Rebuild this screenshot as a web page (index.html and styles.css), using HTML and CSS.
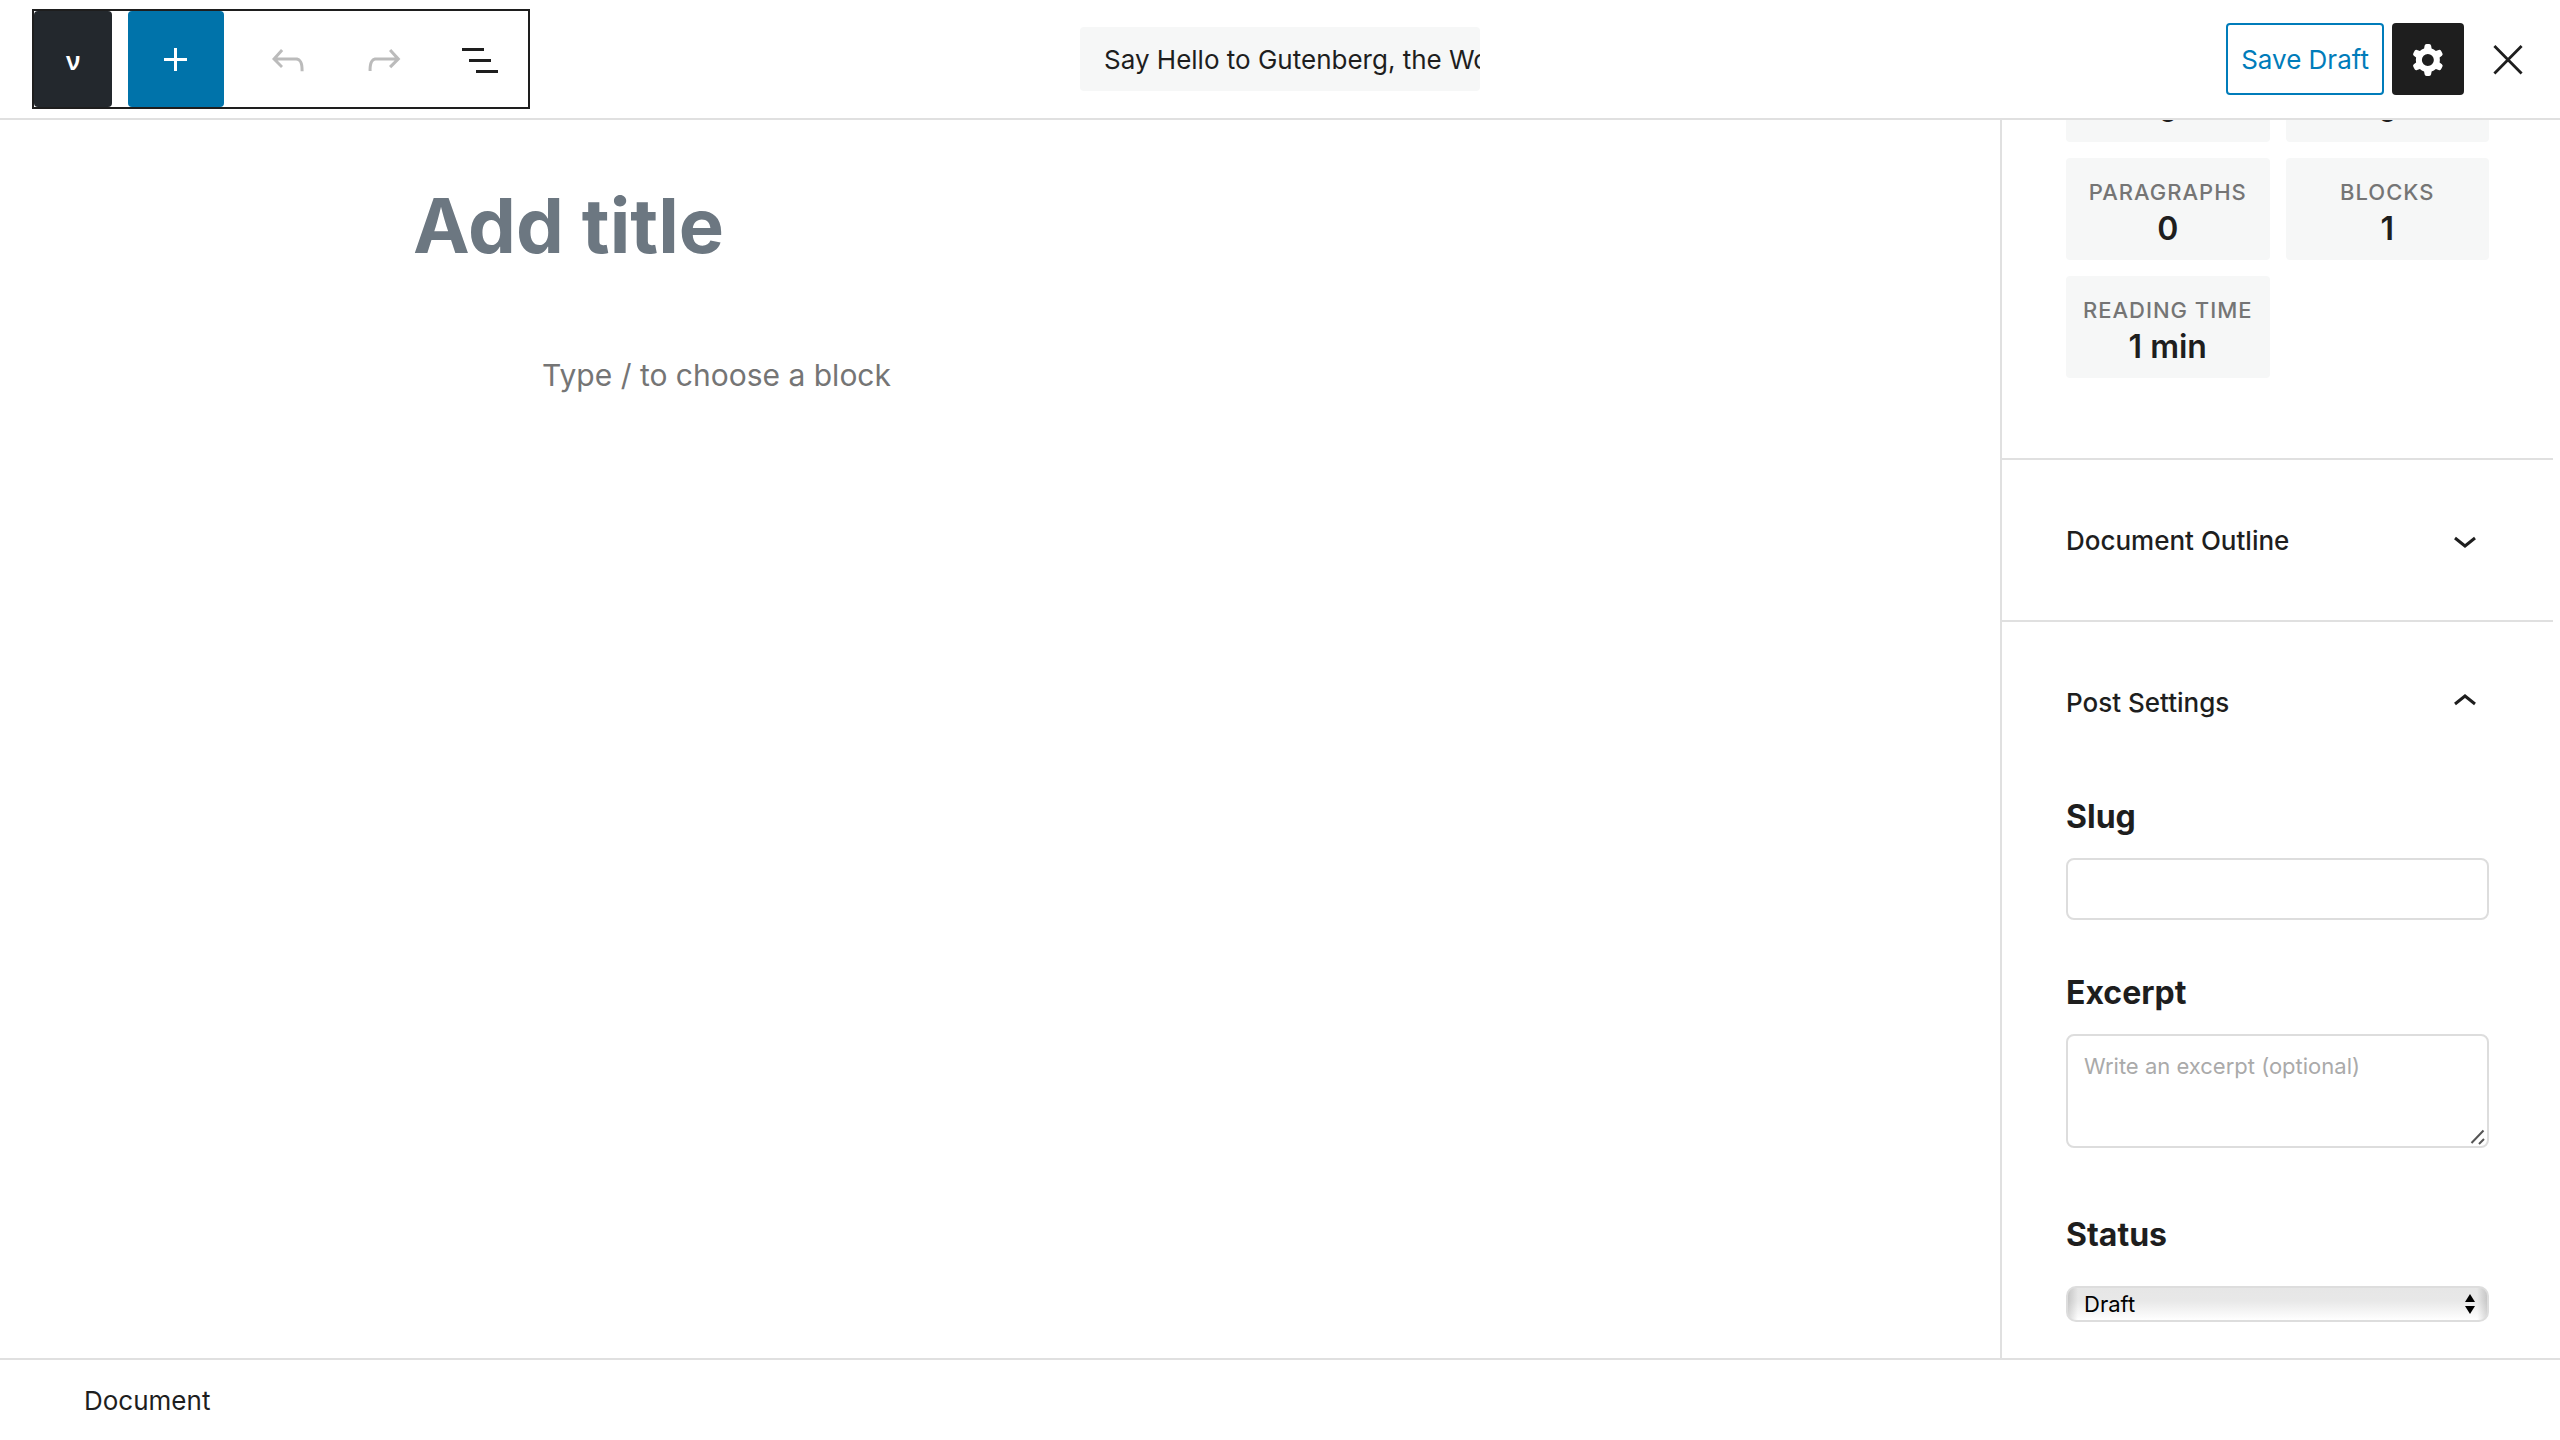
FILE: index.html
```html
<!DOCTYPE html>
<html lang="en">
<head>
<meta charset="utf-8">
<title>Add title</title>
<link rel="stylesheet" href="styles.css">
</head>
<body>
<div class="editor">
  <header class="header">
    <div class="toolbar" role="toolbar" aria-label="Document tools">
      <button class="tool tool-brand" type="button">ν</button>
      <button class="tool tool-add" type="button" aria-label="Add block">
        <svg class="icon" viewBox="0 0 24 24"><path d="M11 6h1.500v5H17.500v1.500h-5v5H11v-5H6V11h5z"/></svg>
      </button>
      <button class="tool tool-muted" type="button" aria-label="Undo">
        <svg class="icon" viewBox="0 0 24 24"><path d="M18.3 11.7c-.6-.6-1.4-.9-2.3-.9H6.7l2.9-3.3-1.1-1-4.5 5L8.5 16l1-1-2.7-2.7H16c.5 0 .9.2 1.3.5 1 1 1 3.4 1 4.5v.3h1.5v-.2c0-1.5 0-4.3-1.5-5.7z"/></svg>
      </button>
      <button class="tool tool-muted" type="button" aria-label="Redo">
        <svg class="icon" viewBox="0 0 24 24"><path d="M15.6 6.5l-1.1 1 2.9 3.3H8c-.9 0-1.7.3-2.3.9-1.4 1.5-1.4 4.2-1.4 5.6v.2h1.5v-.3c0-1.1 0-3.5 1-4.5.3-.3.7-.5 1.3-.5h9.2L14.5 15l1.1 1.1 4.6-4.6-4.6-5z"/></svg>
      </button>
      <button class="tool" type="button" aria-label="List view">
        <svg class="icon" viewBox="0 0 24 24"><path d="M3 6h11v1.500H3zM6.500 11.500h11V13h-11zM10 17h11v1.500H10z"/></svg>
      </button>
    </div>
    <button class="switcher" type="button">Say Hello to Gutenberg, the WordPress</button>
    <div class="actions">
      <button class="save" type="button">Save Draft</button>
      <button class="action action-settings" type="button" aria-label="Settings">
        <svg class="icon" viewBox="0 0 24 24"><path fill-rule="evenodd" d="M10.289 4.836A1 1 0 0111.275 4h1.306a1 1 0 01.987.836l.244 1.466c.787.26 1.503.679 2.108 1.218l1.393-.522a1 1 0 011.216.437l.653 1.13a1 1 0 01-.23 1.273l-1.148.944a6.025 6.025 0 010 2.435l1.149.946a1 1 0 01.23 1.272l-.653 1.13a1 1 0 01-1.216.437l-1.394-.522c-.605.54-1.32.958-2.108 1.218l-.244 1.466a1 1 0 01-.987.836h-1.306a1 1 0 01-.986-.836l-.244-1.466a5.995 5.995 0 01-2.108-1.218l-1.394.522a1 1 0 01-1.217-.436l-.653-1.131a1 1 0 01.23-1.272l1.149-.946a6.026 6.026 0 010-2.435l-1.148-.944a1 1 0 01-.23-1.272l.653-1.131a1 1 0 011.217-.437l1.393.522a5.994 5.994 0 012.108-1.218l.244-1.466zM14.929 12a3 3 0 11-6 0 3 3 0 016 0z"/></svg>
      </button>
      <button class="action" type="button" aria-label="Close">
        <svg class="icon line" viewBox="0 0 24 24"><path d="M5.2 5l13.6 13.8M18.8 5L5.2 18.800"/></svg>
      </button>
    </div>
  </header>

  <div class="body">
    <main class="canvas">
      <div class="writing">
        <input class="post-title" type="text" placeholder="Add title" aria-label="Add title">
        <input class="post-block" type="text" placeholder="Type / to choose a block" aria-label="Empty block">
      </div>
    </main>

    <aside class="sidebar">
      <section class="panel">
        <dl class="stats">
          <div class="stat"><dt>Characters</dt><dd>0</dd></div>
          <div class="stat"><dt>Words</dt><dd>0</dd></div>
          <div class="stat"><dt>Paragraphs</dt><dd>0</dd></div>
          <div class="stat"><dt>Blocks</dt><dd>1</dd></div>
          <div class="stat"><dt>Reading Time</dt><dd>1 min</dd></div>
        </dl>
      </section>
      <section class="panel">
        <button class="panel-toggle" type="button" aria-expanded="false">Document Outline
          <svg class="chevron" viewBox="0 0 28 28"><path d="M4 11l10 8 10-8"/></svg>
        </button>
      </section>
      <section class="panel">
        <button class="panel-toggle" type="button" aria-expanded="true">Post Settings
          <svg class="chevron" viewBox="0 0 28 28"><path d="M4 15l10-8 10 8"/></svg>
        </button>
        <div class="fields">
          <div class="field">
            <label for="slug">Slug</label>
            <input class="control" id="slug" type="text">
          </div>
          <div class="field">
            <label for="excerpt">Excerpt</label>
            <div class="excerpt">
              <textarea class="control" id="excerpt" placeholder="Write an excerpt (optional)"></textarea>
              <svg class="grip" viewBox="0 0 16 16"><path d="M1.500 14L13.500 1.500M9 15l5-5"/></svg>
            </div>
          </div>
          <div class="field field-status">
            <label for="status">Status</label>
            <div class="picker">
              <select id="status"><option>Draft</option></select>
              <svg class="arrows" viewBox="0 0 10 20"><path d="M5 0l5 8H0zM0 12h10l-5 8z"/></svg>
            </div>
          </div>
        </div>
      </section>
    </aside>
  </div>

  <footer class="footer">Document</footer>
</div>
</body>
</html>
```
FILE: styles.css
```css
* {
  box-sizing: border-box;
}

body {
  margin: 0;
  background: #fff;
  color: #1e1e1e;
  font-family: Inter, "Liberation Sans", sans-serif;
  font-size: 26px;
  line-height: 32px;
}

button,
input,
textarea,
select {
  margin: 0;
  border: 0;
  background: none;
  color: inherit;
  font: inherit;
}

button {
  padding: 2px 0 0;
}

.editor {
  display: grid;
  grid-template-rows: auto minmax(0, 1fr) auto;
  height: 100vh;
}

/* Header */

.header {
  display: grid;
  grid-template-columns: 1fr auto 1fr;
  align-items: center;
  padding: 9px 32px;
  border-bottom: 2px solid #e0e0e0;
}

.toolbar {
  display: flex;
  justify-self: start;
  border: 2px solid #1e1e1e;
}

.tool {
  display: flex;
  align-items: center;
  justify-content: center;
  width: 96px;
  height: 96px;
  border-radius: 4px;
}

.tool-brand {
  width: 78px;
  margin-right: 16px;
  background: #23282d;
  color: #fff;
  font-family: "Noto Sans", sans-serif;
  font-weight: 600;
}

.tool-add {
  margin-right: 16px;
  background: #0073aa;
  color: #fff;
}

.tool-muted {
  color: #bbb;
}

.icon {
  width: 48px;
  height: 48px;
  fill: currentColor;
}

.line {
  fill: none;
  stroke: currentColor;
  stroke-width: 1.4;
}

.switcher {
  width: 400px;
  height: 64px;
  padding-left: 24px;
  overflow: hidden;
  border-radius: 4px;
  background: #f6f7f7;
  text-align: left;
  white-space: nowrap;
}

.actions {
  display: flex;
  gap: 8px;
  justify-self: end;
  margin-right: -16px;
}

.save {
  height: 72px;
  padding: 2px 13px 0;
  border: 2px solid #007cba;
  border-radius: 4px;
  color: #007cba;
}

.action {
  display: flex;
  align-items: center;
  justify-content: center;
  width: 72px;
  height: 72px;
  border-radius: 4px;
}

.action-settings {
  background: #1e1e1e;
  color: #fff;
}

/* Writing area */

.body {
  display: grid;
  grid-template-columns: 1fr 560px;
}

.canvas {
  padding: 55px 64px;
}

.writing {
  display: flex;
  flex-direction: column;
  gap: 50px;
  max-width: 1174px;
  margin: 0 auto;
}

.post-title {
  height: 100px;
  padding: 0;
  font-size: 76px;
  font-weight: 700;
}

.post-title::placeholder {
  color: #6c7781;
}

.post-block {
  height: 100px;
  padding: 0 129px;
  font-size: 30px;
}

.post-block::placeholder {
  color: #757575;
}

/* Sidebar */

.sidebar {
  display: flex;
  flex-direction: column;
  justify-content: flex-end;
  min-height: 0;
  padding: 0 7px 36px 0;
  overflow: hidden;
  border-left: 2px solid #e0e0e0;
}

.panel {
  flex: none;
}

.panel + .panel {
  border-top: 2px solid #e0e0e0;
}

.stats {
  display: grid;
  grid-template-columns: 1fr 1fr;
  gap: 16px;
  margin: 0;
  padding: 0 64px 80px;
}

.stat {
  padding: 18px 0 10px;
  border-radius: 4px;
  background: #f6f7f7;
  text-align: center;
}

.stat dt {
  color: #757575;
  font-size: 22px;
  font-weight: 500;
  letter-spacing: 1px;
  text-transform: uppercase;
  white-space: nowrap;
}

.stat dd {
  margin: 0;
  font-size: 32px;
  font-weight: 600;
  line-height: 42px;
}

.panel-toggle {
  display: flex;
  align-items: center;
  justify-content: space-between;
  width: 100%;
  height: 160px;
  padding: 2px 74px 0 64px;
  font-weight: 500;
}

.chevron {
  width: 28px;
  height: 28px;
  fill: none;
  stroke: currentColor;
  stroke-width: 3;
}

.fields {
  display: flex;
  flex-direction: column;
  gap: 53px;
  padding: 15px 64px 0;
}

.field {
  display: flex;
  flex-direction: column;
  gap: 21px;
}

.field-status {
  gap: 31px;
  padding-top: 14px;
}

.field label {
  font-size: 32px;
  font-weight: 700;
  line-height: 40px;
}

.control {
  display: block;
  width: 100%;
  height: 62px;
  padding: 14px 16px;
  border: 2px solid #ddd;
  border-radius: 8px;
  font-size: 22px;
}

textarea.control {
  height: 114px;
  resize: none;
}

.control::placeholder {
  color: #aaa;
}

.excerpt,
.picker {
  position: relative;
}

.grip {
  position: absolute;
  right: 3px;
  bottom: 3px;
  width: 16px;
  height: 16px;
  fill: none;
  stroke: #555;
  stroke-width: 2;
}

.picker select {
  display: block;
  width: 100%;
  height: 36px;
  padding: 0 16px;
  appearance: none;
  border: 2px solid #ddd;
  border-radius: 10px;
  background:
    linear-gradient(90deg, rgba(0, 0, 0, 0.14), transparent 10px, transparent calc(100% - 10px), rgba(0, 0, 0, 0.14)),
    linear-gradient(#e6e6e6, #e8e8e8 40%, #fff);
  color: #000;
  font-size: 22px;
}

.arrows {
  position: absolute;
  top: 8px;
  right: 14px;
  width: 10px;
  height: 20px;
  pointer-events: none;
}

/* Footer */

.footer {
  padding: 25px 84px 23px;
  border-top: 2px solid #e0e0e0;
}
```
